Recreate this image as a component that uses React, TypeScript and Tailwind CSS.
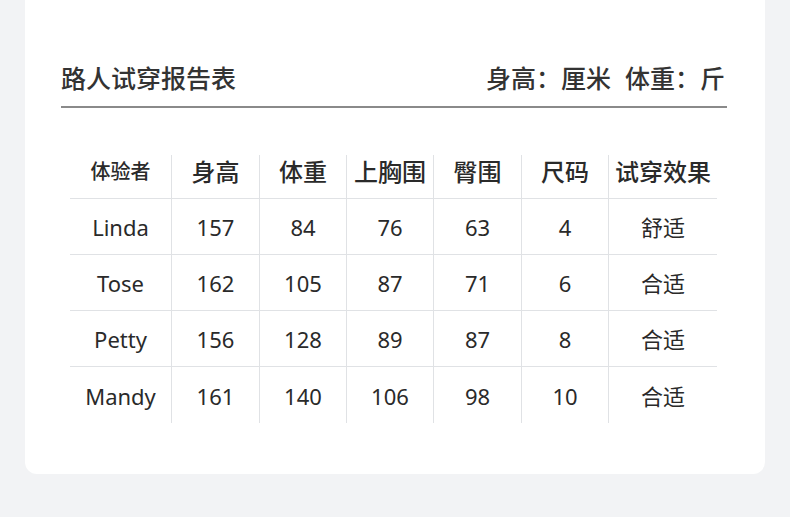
import React from "react";

const cols = [101, 88, 87, 87, 88, 87, 109];
const headers = ["体验者", "身高", "体重", "上胸围", "臀围", "尺码", "试穿效果"];
const rows = [
  ["Linda", "157", "84", "76", "63", "4", "舒适"],
  ["Tose", "162", "105", "87", "71", "6", "合适"],
  ["Petty", "156", "128", "89", "87", "8", "合适"],
  ["Mandy", "161", "140", "106", "98", "10", "合适"],
];

export default function App() {
  return (
    <div
      className="w-[790px] h-[517px] bg-[#f2f3f5] overflow-hidden"
      style={{ fontFamily: '"Noto Sans", "Noto Sans CJK SC", sans-serif' }}
    >
      <div className="ml-[25px] w-[740px] h-[474px] bg-white rounded-b-[12px] pl-[36px] pr-[38px]">
        <div className="pt-[64px] pb-[14px] border-b-2 border-[#8a8a8a] flex justify-between items-center text-[#333] font-medium text-[25px] leading-[28px]">
          <span>路人试穿报告表</span>
          <span className="pr-[2px] flex">
            <span>身高：厘米</span>
            <span className="ml-[14px]">体重：斤</span>
          </span>
        </div>
        <div
          className="ml-[9px] mt-[47px] grid text-[#2a2a2a]"
          style={{ gridTemplateColumns: cols.map((c) => `${c}px`).join(" ") }}
        >
          {headers.map((h, i) => (
            <div
              key={h}
              className={`h-[44px] pb-[10px] flex items-center justify-center font-medium border-b border-[#e0e2e5] ${
                i === 0 ? "text-[20px]" : "text-[24px] border-l"
              }`}
            >
              {h}
            </div>
          ))}
          {rows.map((r, ri) =>
            r.map((c, ci) => (
              <div
                key={`${ri}-${ci}`}
                className={`h-[56px] pt-[2px] flex items-center justify-center text-[22px] font-normal border-[#e0e2e5] ${
                  ci === 0 ? "" : "border-l"
                } ${ri < rows.length - 1 ? "border-b" : ""} ${ci === 6 ? "text-[21px]" : ""}`}
              >
                {c}
              </div>
            ))
          )}
        </div>
      </div>
    </div>
  );
}
